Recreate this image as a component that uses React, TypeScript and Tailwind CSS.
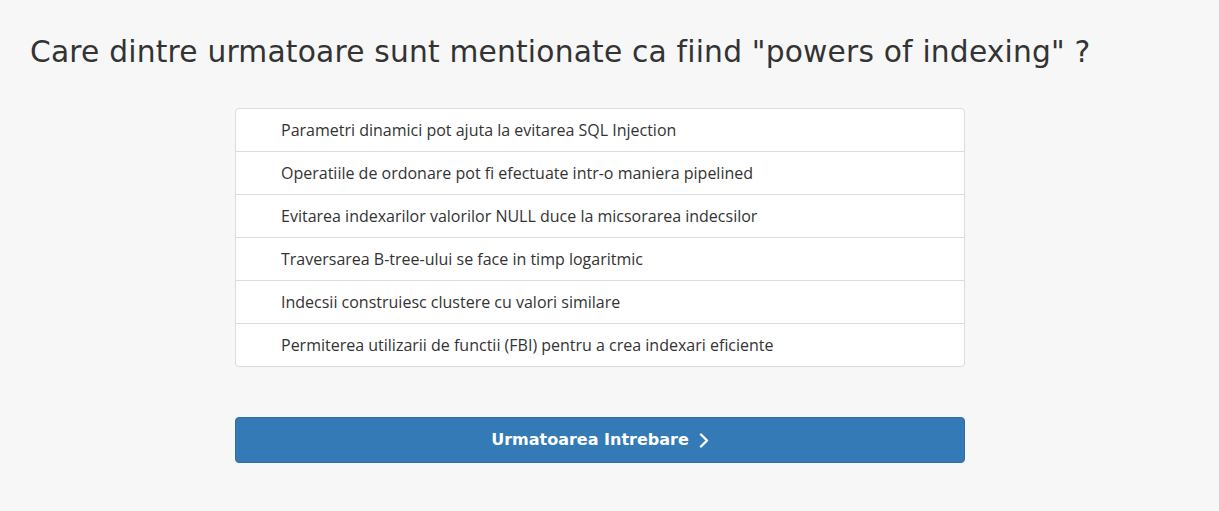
const answers = [
  'Parametri dinamici pot ajuta la evitarea SQL Injection',
  'Operatiile de ordonare pot fi efectuate intr-o maniera pipelined',
  'Evitarea indexarilor valorilor NULL duce la micsorarea indecsilor',
  'Traversarea B-tree-ului se face in timp logaritmic',
  'Indecsii construiesc clustere cu valori similare',
  'Permiterea utilizarii de functii (FBI) pentru a crea indexari eficiente',
];

export default function App() {
  return (
    <div className="min-h-screen bg-[#f7f7f7] pt-[30px]">
      <h1 className="pl-[30px] text-[29.7px] leading-[44px] text-[#333] font-['DejaVu_Sans',sans-serif] tracking-[0.2px]">
        Care dintre urmatoare sunt mentionate ca fiind "powers of indexing" ?
      </h1>

      <div className="ml-[235px] mt-[34px] w-[730px]">
        <ul className="rounded-[4px] border border-[#ddd] bg-white">
          {answers.map((a, i) => (
            <li
              key={i}
              className={`h-[42px] box-content flex items-center pl-[45px] text-[16px] text-[#333] font-['Open_Sans',sans-serif] ${
                i > 0 ? 'border-t border-[#ddd]' : ''
              }`}
            >
              {a}
            </li>
          ))}
        </ul>

        <button className="mt-[50px] w-full h-[46px] rounded-[4px] border border-[#2e6da4] bg-[#337ab7] text-white flex items-center justify-center gap-[10px] font-['DejaVu_Sans',sans-serif] font-bold text-[16px]">
          Urmatoarea Intrebare
          <svg width="10" height="15" viewBox="0 0 10 15" fill="none" className="mt-[1px]">
            <polyline
              points="2,1.5 8,7.5 2,13.5"
              stroke="currentColor"
              strokeWidth="2.4"
              strokeLinecap="round"
              strokeLinejoin="round"
            />
          </svg>
        </button>
      </div>
    </div>
  );
}
